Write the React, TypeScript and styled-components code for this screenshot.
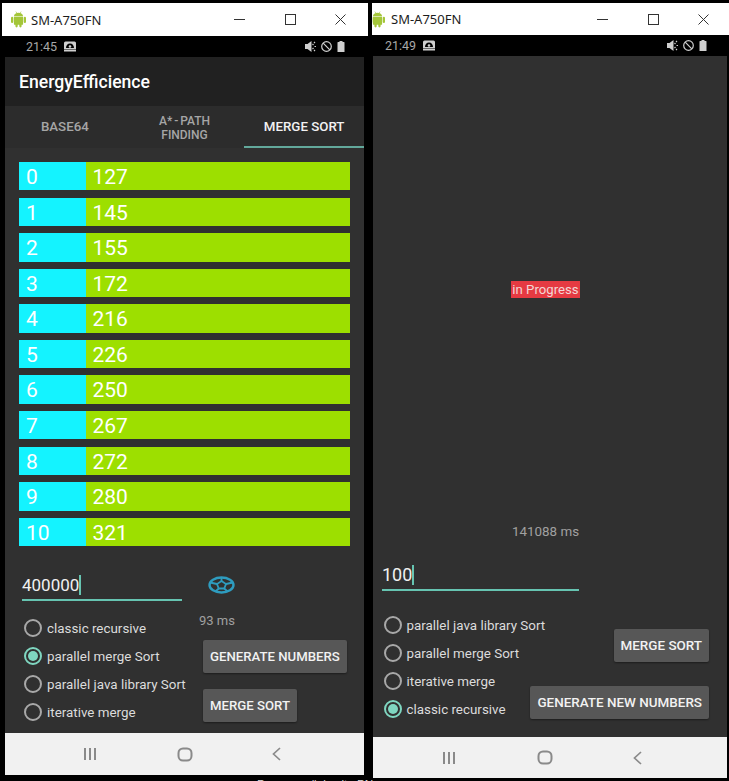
import React from 'react';
import styled, { createGlobalStyle } from 'styled-components';

const GlobalStyle = createGlobalStyle`
  html, body {
    margin: 0;
    padding: 0;
    background: #000;
  }
  * {
    box-sizing: border-box;
  }
`;

const Desktop = styled.div`
  display: flex;
  width: 729px;
  height: 781px;
  overflow: hidden;
  background: #000;
  font-family: Roboto, "Liberation Sans", sans-serif;
`;

const Window = styled.div<{ $left: number; $width: number; $inset: number }>`
  display: flex;
  flex-direction: column;
  flex: none;
  width: ${(p) => p.$width}px;
  margin-left: ${(p) => p.$left}px;
  padding-top: 3px;
  --inset: ${(p) => p.$inset}px;
`;

const TitleBar = styled.div<{ $height: number; $iconLeft: number; $textGap: number }>`
  display: flex;
  align-items: center;
  flex: none;
  height: ${(p) => p.$height}px;
  padding-left: ${(p) => Math.max(p.$iconLeft, 0)}px;
  padding-right: calc(var(--inset) - 1px);
  overflow: hidden;
  background: #fff;
  color: #1c1c1c;
  font-family: "Noto Sans", "Liberation Sans", sans-serif;
  font-size: 13px;

  & > svg {
    flex: none;
    margin-left: ${(p) => Math.min(p.$iconLeft, 0)}px;
    margin-right: ${(p) => p.$textGap}px;
  }
`;

const WindowControls = styled.div`
  display: flex;
  margin-left: auto;
`;

const WindowControl = styled.div`
  display: flex;
  align-items: center;
  justify-content: center;
  width: 50.5px;
  height: 32px;
`;

const StatusBar = styled.div<{ $height: number; $left: number; $right: number }>`
  display: flex;
  align-items: center;
  flex: none;
  height: ${(p) => p.$height}px;
  padding: 0 ${(p) => p.$right}px 0 ${(p) => p.$left}px;
  background: #000;
  color: #a8a8a8;
  font-size: 12.5px;
`;

const StatusTime = styled.span`
  margin-right: 7px;
`;

const StatusIcons = styled.div`
  display: flex;
  align-items: center;
  gap: 5px;
  margin-left: auto;
`;

const Screen = styled.div<{ $height: number }>`
  display: flex;
  flex-direction: column;
  flex: none;
  height: ${(p) => p.$height}px;
  margin: 0 calc(var(--inset) + 1px) 0 var(--inset);
  background: #303030;
`;

const AppBar = styled.div`
  display: flex;
  align-items: center;
  flex: none;
  height: 49px;
  padding-left: 14px;
  background: #212121;
  color: #fff;
  font-size: 17.6px;
  font-weight: 500;
`;

const Tabs = styled.div`
  display: grid;
  grid-template-columns: repeat(3, minmax(0, 1fr));
  flex: none;
  height: 42px;
  background: #2c2c2c;
`;

const Tab = styled.div<{ $active?: boolean; $small?: boolean }>`
  display: flex;
  align-items: center;
  justify-content: center;
  padding: ${(p) => (p.$small ? 4 : 2)}px 20px 0;
  border-bottom: 2px solid ${(p) => (p.$active ? '#62a89b' : 'transparent')};
  color: ${(p) => (p.$active ? '#f2f2f2' : '#a6a6a6')};
  font-size: ${(p) => (p.$small ? 12 : 13.3)}px;
  font-weight: 500;
  line-height: 14px;
  text-align: center;
  white-space: ${(p) => (p.$small ? 'normal' : 'nowrap')};
  word-spacing: ${(p) => (p.$small ? -1 : 0)}px;
`;

const Numbers = styled.div`
  display: flex;
  flex-direction: column;
  flex: none;
  gap: 7.2px;
  margin: 14px 14px 0;
`;

const NumberRow = styled.div`
  display: flex;
  height: 28.4px;
  color: #fff;
  font-size: 21px;
  line-height: 30px;
`;

const IndexCell = styled.div`
  width: 66.5px;
  padding-left: 7px;
  background: #14f3ff;
`;

const ValueCell = styled.div`
  flex: 1;
  padding-left: 7px;
  background: #9ddf00;
`;

const ControlsLeft = styled.div`
  display: grid;
  grid-template-columns: 177px 1fr;
  flex: none;
  margin: 25px 0 0 17px;
`;

const LeftColumn = styled.div`
  display: flex;
  flex-direction: column;
`;

const RightColumn = styled.div`
  display: flex;
  flex-direction: column;
  align-items: flex-start;
`;

const Field = styled.div<{ $width: number; $size: number }>`
  display: flex;
  align-items: center;
  width: ${(p) => p.$width}px;
  height: 30px;
  border-bottom: 2px solid #66c4b1;
  color: #f0f0f0;
  font-size: ${(p) => p.$size}px;
  line-height: 28px;
`;

const Caret = styled.span`
  width: 1.5px;
  height: 20px;
  background: #66c4b1;
`;

const Radios = styled.div<{ $top: number; $left: number }>`
  display: flex;
  flex-direction: column;
  margin-top: ${(p) => p.$top}px;
  margin-left: ${(p) => p.$left}px;
`;

const RadioRow = styled.div`
  display: flex;
  align-items: center;
  height: 28px;
  color: #dcdcdc;
  font-size: 13.4px;
  white-space: nowrap;
`;

const RadioMark = styled.span<{ $checked?: boolean }>`
  display: flex;
  align-items: center;
  justify-content: center;
  flex: none;
  width: 18px;
  height: 18px;
  margin-right: 5px;
  border: 2px solid ${(p) => (p.$checked ? '#7fd6c0' : '#a8a8a8')};
  border-radius: 50%;

  &::after {
    content: '';
    display: ${(p) => (p.$checked ? 'block' : 'none')};
    width: 10px;
    height: 10px;
    border-radius: 50%;
    background: #7fd6c0;
  }
`;

const Spinner = styled.div`
  margin: 5px 0 0 9px;
  height: 20px;
`;

const Millis = styled.div`
  margin-top: 17px;
  color: #a0a0a0;
  font-size: 13px;
  line-height: 16px;
`;

const ActionButton = styled.div<{ $top?: number; $left?: number; $size?: number }>`
  display: flex;
  align-items: center;
  justify-content: center;
  flex: none;
  height: 32.5px;
  margin-top: ${(p) => p.$top ?? 0}px;
  margin-left: ${(p) => p.$left ?? 0}px;
  padding: 0 7px;
  border-radius: 2px;
  background: #575757;
  box-shadow: 0 1px 2px rgba(0, 0, 0, 0.4);
  color: #f2f2f2;
  font-size: ${(p) => p.$size ?? 13.2}px;
  font-weight: 500;
  white-space: nowrap;
`;

const NavBar = styled.div<{ $height: number; $left: number; $right: number }>`
  display: flex;
  align-items: center;
  justify-content: space-between;
  flex: none;
  height: ${(p) => p.$height}px;
  margin: 0 calc(var(--inset) + 1px) 0 var(--inset);
  padding: 0 ${(p) => p.$right}px 0 ${(p) => p.$left}px;
  background: #f1f1f1;
`;

const Progress = styled.div`
  display: flex;
  justify-content: center;
  flex: none;
  margin: 225px 0 0 -9px;
`;

const ProgressLabel = styled.span`
  padding: 0 1px;
  background: #e53a42;
  color: #f3d6d6;
  font-size: 13.2px;
  line-height: 17px;
`;

const CenteredMillis = styled(Millis)`
  margin-top: 226px;
  margin-left: -9px;
  font-size: 13.4px;
  text-align: center;
`;

const FieldSlot = styled.div`
  margin: 21px 0 0 9px;
`;

const ControlsRight = styled.div`
  display: grid;
  grid-template-columns: minmax(0, 1fr) auto;
  flex: none;
  margin: 15px 18px 0 10px;
`;

const RightButtons = styled.div`
  display: flex;
  flex-direction: column;
  align-items: flex-end;
  padding-top: 23px;
`;

const FooterNote = styled.div`
  flex: none;
  height: 6px;
  margin: 2px -6px 0 0;
  padding-left: 255px;
  overflow: hidden;
  color: #d8d8d8;
  font-family: "Liberation Sans", sans-serif;
  font-size: 11.7px;
  line-height: 14px;
  white-space: nowrap;
`;

const AndroidIcon = () => (
  <svg width="15" height="17" viewBox="0 0 17 18" fill="#a4c639">
    <rect x="0" y="6" width="2.6" height="7" rx="1.3" />
    <rect x="14.4" y="6" width="2.6" height="7" rx="1.3" />
    <path d="M3.3 6h10.4v8a1 1 0 0 1-1 1H4.3a1 1 0 0 1-1-1z" />
    <rect x="5" y="13" width="2.6" height="5" rx="1.3" />
    <rect x="9.4" y="13" width="2.6" height="5" rx="1.3" />
    <path d="M3.3 5.3C3.5 3 5.6 1.4 8.5 1.4s5 1.6 5.2 3.9z" />
    <path d="M5.5 0l1.3 2M11.5 0l-1.3 2" stroke="#a4c639" strokeWidth="0.7" />
  </svg>
);

const MinimizeIcon = () => (
  <svg width="11" height="11" viewBox="0 0 11 11">
    <path d="M0 5.5h11" stroke="#333" strokeWidth="1" />
  </svg>
);

const MaximizeIcon = () => (
  <svg width="11" height="11" viewBox="0 0 11 11" fill="none">
    <rect x="0.5" y="0.5" width="10" height="10" stroke="#333" />
  </svg>
);

const CloseIcon = () => (
  <svg width="11" height="11" viewBox="0 0 11 11">
    <path d="M0.5 0.5l10 10M10.5 0.5l-10 10" stroke="#333" strokeWidth="1" />
  </svg>
);

const HotspotIcon = () => (
  <svg width="12" height="11" viewBox="0 0 12 10" fill="#cfcfcf">
    <path d="M1.5 0h9A1.5 1.5 0 0 1 12 1.5V8H0V1.5A1.5 1.5 0 0 1 1.5 0zM2 6.5h8C10 4 8.3 2 6 2S2 4 2 6.5z" fillRule="evenodd" />
    <circle cx="6" cy="5" r="1.3" />
    <rect x="0" y="8.5" width="12" height="1.5" />
  </svg>
);

const MuteIcon = () => (
  <svg width="11" height="11" viewBox="0 0 11 11" fill="#cfcfcf">
    <path d="M0 3h2.5L6.5 0v11L2.5 8H0z" />
    <path d="M7.5 3l1 1M7.5 8l1-1M9 1l1 1M9 10l1-1M9.5 5.5h1.5" stroke="#cfcfcf" strokeWidth="1.2" />
  </svg>
);

const BlockedIcon = () => (
  <svg width="11" height="11" viewBox="0 0 11 11" fill="none" stroke="#cfcfcf" strokeWidth="1.2">
    <circle cx="5.5" cy="5.5" r="4.8" />
    <path d="M2.2 2.2l6.6 6.6" />
  </svg>
);

const BatteryIcon = () => (
  <svg width="8" height="11" viewBox="0 0 7 11" fill="#cfcfcf">
    <path d="M2 0h3v1h1.5a.5.5 0 0 1 .5.5V11H0V1.5A.5.5 0 0 1 .5 1H2z" />
  </svg>
);

const SpinnerIcon = () => (
  <svg width="27" height="18" viewBox="0 0 27 18" fill="none" stroke="#2e9cbf">
    <ellipse cx="13.5" cy="9" rx="12" ry="7.5" strokeWidth="2.4" />
    <path d="M13.5 5l4.5 3-1.8 4.5h-5.4L9 8z" strokeWidth="1.8" />
    <path d="M13.5 1.5V5M18 8l7-1.5M16.2 12.5l3.5 3M10.8 12.5l-3.5 3M9 8l-7-1.5" strokeWidth="1.8" />
  </svg>
);

const RecentsIcon = () => (
  <svg width="14" height="14" viewBox="0 0 14 14" fill="#8a8a8a">
    <rect x="1" y="1" width="2" height="12" />
    <rect x="6" y="1" width="2" height="12" />
    <rect x="11" y="1" width="2" height="12" />
  </svg>
);

const HomeIcon = () => (
  <svg width="16" height="15" viewBox="0 0 16 15" fill="none" stroke="#8a8a8a" strokeWidth="2">
    <rect x="1.5" y="1.5" width="13" height="12" rx="4.5" />
  </svg>
);

const BackIcon = () => (
  <svg width="9" height="14" viewBox="0 0 9 14" fill="none" stroke="#8a8a8a" strokeWidth="1.7">
    <path d="M8 1L1.5 7 8 13" />
  </svg>
);

const TitleRow = ({ height, iconLeft, textGap }: { height: number; iconLeft: number; textGap: number }) => (
  <TitleBar $height={height} $iconLeft={iconLeft} $textGap={textGap}>
    <AndroidIcon />
    <span>SM-A750FN</span>
    <WindowControls>
      <WindowControl><MinimizeIcon /></WindowControl>
      <WindowControl><MaximizeIcon /></WindowControl>
      <WindowControl><CloseIcon /></WindowControl>
    </WindowControls>
  </TitleBar>
);

const Status = ({ time, height, left, right }: { time: string; height: number; left: number; right: number }) => (
  <StatusBar $height={height} $left={left} $right={right}>
    <StatusTime>{time}</StatusTime>
    <HotspotIcon />
    <StatusIcons>
      <MuteIcon />
      <BlockedIcon />
      <BatteryIcon />
    </StatusIcons>
  </StatusBar>
);

const Navigation = ({ height, left, right }: { height: number; left: number; right: number }) => (
  <NavBar $height={height} $left={left} $right={right}>
    <RecentsIcon />
    <HomeIcon />
    <BackIcon />
  </NavBar>
);

const RadioGroup = ({ options, checked, top, left }: { options: string[]; checked: string; top: number; left: number }) => (
  <Radios $top={top} $left={left}>
    {options.map((option) => (
      <RadioRow key={option}>
        <RadioMark $checked={option === checked} />
        {option}
      </RadioRow>
    ))}
  </Radios>
);

const sorted = [127, 145, 155, 172, 216, 226, 250, 267, 272, 280, 321];

export default function App() {
  return (
    <>
      <GlobalStyle />
      <Desktop>
        <Window $left={2} $width={366} $inset={3}>
          <TitleRow height={33} iconLeft={9} textGap={5} />
          <Status time="21:45" height={21} left={24} right={23} />
          <Screen $height={676}>
            <AppBar>EnergyEfficience</AppBar>
            <Tabs>
              <Tab>BASE64</Tab>
              <Tab $small>A* - PATH FINDING</Tab>
              <Tab $active>MERGE SORT</Tab>
            </Tabs>
            <Numbers>
              {sorted.map((value, index) => (
                <NumberRow key={index}>
                  <IndexCell>{index}</IndexCell>
                  <ValueCell>{value}</ValueCell>
                </NumberRow>
              ))}
            </Numbers>
            <ControlsLeft>
              <LeftColumn>
                <Field $width={160} $size={17}>
                  400000
                  <Caret />
                </Field>
                <RadioGroup
                  top={13}
                  left={2}
                  checked="parallel merge Sort"
                  options={['classic recursive', 'parallel merge Sort', 'parallel java library Sort', 'iterative merge']}
                />
              </LeftColumn>
              <RightColumn>
                <Spinner><SpinnerIcon /></Spinner>
                <Millis>93 ms</Millis>
                <ActionButton $top={11} $left={4}>GENERATE NUMBERS</ActionButton>
                <ActionButton $top={16.5} $left={4}>MERGE SORT</ActionButton>
              </RightColumn>
            </ControlsLeft>
          </Screen>
          <Navigation height={42} left={78} right={83} />
          <FooterNote>Personenrückseite PNG</FooterNote>
        </Window>
        <Window $left={4} $width={357} $inset={1}>
          <TitleRow height={32} iconLeft={-2} textGap={6} />
          <Status time="21:49" height={21} left={13} right={22} />
          <Screen $height={681}>
            <Progress>
              <ProgressLabel>in Progress</ProgressLabel>
            </Progress>
            <CenteredMillis>141088 ms</CenteredMillis>
            <FieldSlot>
              <Field $width={197} $size={18}>
                100
                <Caret />
              </Field>
            </FieldSlot>
            <ControlsRight>
              <RadioGroup
                top={5}
                left={0.5}
                checked="classic recursive"
                options={['parallel java library Sort', 'parallel merge Sort', 'iterative merge', 'classic recursive']}
              />
              <RightButtons>
                <ActionButton $size={13.45}>MERGE SORT</ActionButton>
                <ActionButton $top={24.5} $size={13.45}>GENERATE NEW NUMBERS</ActionButton>
              </RightButtons>
            </ControlsRight>
          </Screen>
          <Navigation height={41} left={69} right={85} />
        </Window>
      </Desktop>
    </>
  );
}
